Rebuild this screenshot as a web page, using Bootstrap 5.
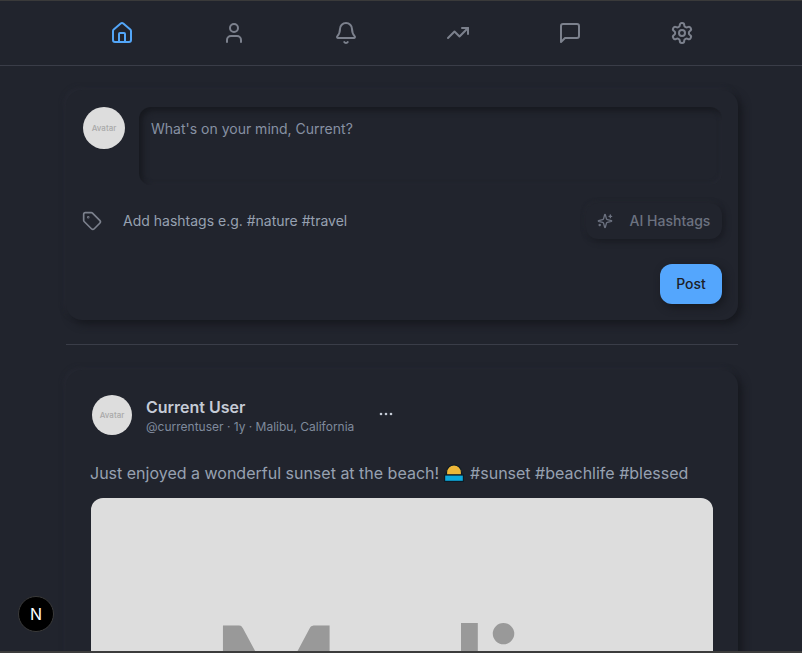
<!DOCTYPE html>
<html lang="en">
<head>
  <meta charset="UTF-8">
  <title>Feed</title>
  <link href="https://cdn.jsdelivr.net/npm/bootstrap@5.3.0/dist/css/bootstrap.min.css" rel="stylesheet">
  <style>
    html, body { height: 100%; overflow: hidden; }
    body {
      background: #21242d;
      font-family: Inter, "Liberation Sans", sans-serif;
      color: #9aa3b2;
      border-top: 1px solid #3a3a3a;
      border-bottom: 2px solid #3c3c3c;
    }
    .lc { fill: none; stroke: currentColor; stroke-width: 2; stroke-linecap: round; stroke-linejoin: round; }
    .top-nav { height: 65px; border-bottom: 1px solid #3a3d48; }
    .nav-cell { width: 112px; color: #7c818d; }
    .nav-cell.active { color: #53a6f8; }
    .page-col { width: 672px; margin-left: 66px; }
    .neo-card {
      background: #21242d;
      border-radius: 16px;
      box-shadow: 4px 4px 8px #16181e, -2px -2px 5px #272a34;
    }
    .composer { height: 230px; padding: 17px 16px 16px 17px; margin-top: 24px; }
    .composer-top { column-gap: 14px; }
    .avatar-ph {
      background: #dddddd;
      color: #a9a9a9;
      border-radius: 50%;
      font-weight: 500;
      flex-shrink: 0;
    }
    .av-42 { width: 42px; height: 42px; font-size: 8px; }
    .av-40 { width: 40px; height: 40px; font-size: 8px; margin-left: 1px; margin-right: 14px; }
    .composer-input {
      height: 78px;
      padding: 13px 12px;
      border-radius: 12px;
      font-size: 14px;
      line-height: 18px;
      color: #8791a3;
      box-shadow: inset 3px 3px 6px #16181e, inset -1px -1px 4px #282b35;
    }
    .tag-row { height: 36px; margin-top: 18px; }
    .tag-icon { width: 22px; margin-right: 19px; margin-left: -1px; color: #7c818d; }
    .tag-text { font-size: 14px; color: #97a1b1; padding-bottom: 1px; }
    .ai-btn {
      width: 136px;
      height: 36px;
      gap: 17px;
      padding: 0 1px 1px 0;
      border-radius: 12px;
      font-size: 14px;
      font-weight: 500;
      color: #6c7280;
      background: #21242d;
      box-shadow: 2px 2px 6px #181a21, -1px -1px 4px #272a33;
    }
    .post-btn {
      width: 62px;
      height: 40px;
      margin-top: 25px;
      padding-bottom: 1px;
      border-radius: 12px;
      background: #54a6fd;
      color: #1c2027;
      font-size: 14px;
      font-weight: 500;
      box-shadow: 3px 3px 8px #16181e;
    }
    .divider-line { height: 1px; background: #3a3d48; margin: 24px 0 25px; }
    .post-card { padding: 25px 25px 0 25px; height: 400px; }
    .user-name { font-size: 16px; font-weight: 600; line-height: 24px; color: #c5cbd6; }
    .user-meta { font-size: 12px; line-height: 16px; color: #7f8a9c; }
    .more-dots { width: 14px; margin-left: 25px; margin-bottom: 2px; color: #c5cbd6; }
    .post-text { font-size: 16px; line-height: 24px; color: #97a1b1; margin: 26px 0 13px -1px; }
    .emoji-pic { vertical-align: -3px; margin: 0 2px 0 0; }
    .img-ph {
      background: #dddddd;
      height: 400px;
      border-radius: 12px;
      overflow: hidden;
      color: #999999;
      font-family: Lato, sans-serif;
      font-weight: 700;
      font-size: 136px;
      line-height: 1;
      padding: 106px 0 0 121px;
    }
    .ph-a { letter-spacing: 43px; }
    .next-badge {
      position: fixed;
      left: 18px;
      bottom: 21px;
      width: 36px;
      height: 36px;
      background: #000;
      border: 1px solid #3a3a3a;
      border-radius: 50%;
      color: #fff;
      font-size: 16px;
      font-weight: 400;
    }
  </style>
</head>
<body>
  <nav class="top-nav">
    <div class="page-col d-flex h-100">
      <div class="nav-cell active d-flex align-items-center justify-content-center">
        <svg class="lc" width="24" height="24" viewBox="0 0 24 24"><path d="M15 21v-8a1 1 0 0 0-1-1h-4a1 1 0 0 0-1 1v8"/><path d="M3 10a2 2 0 0 1 .709-1.528l7-5.999a2 2 0 0 1 2.582 0l7 5.999A2 2 0 0 1 21 10v9a2 2 0 0 1-2 2H5a2 2 0 0 1-2-2z"/></svg>
      </div>
      <div class="nav-cell d-flex align-items-center justify-content-center">
        <svg class="lc" width="24" height="24" viewBox="0 0 24 24"><path d="M19 21v-2a4 4 0 0 0-4-4H9a4 4 0 0 0-4 4v2"/><circle cx="12" cy="7" r="4"/></svg>
      </div>
      <div class="nav-cell d-flex align-items-center justify-content-center">
        <svg class="lc" width="24" height="24" viewBox="0 0 24 24"><path d="M10.268 21a2 2 0 0 0 3.464 0"/><path d="M3.262 15.326A1 1 0 0 0 4 17h16a1 1 0 0 0 .74-1.673C19.41 13.956 18 12.499 18 8A6 6 0 0 0 6 8c0 4.499-1.411 5.956-2.738 7.326"/></svg>
      </div>
      <div class="nav-cell d-flex align-items-center justify-content-center">
        <svg class="lc" width="24" height="24" viewBox="0 0 24 24"><polyline points="22 7 13.5 15.5 8.5 10.5 2 17"/><polyline points="16 7 22 7 22 13"/></svg>
      </div>
      <div class="nav-cell d-flex align-items-center justify-content-center">
        <svg class="lc" width="24" height="24" viewBox="0 0 24 24"><path d="M21 15a2 2 0 0 1-2 2H7l-4 4V5a2 2 0 0 1 2-2h14a2 2 0 0 1 2 2z"/></svg>
      </div>
      <div class="nav-cell d-flex align-items-center justify-content-center">
        <svg class="lc" width="24" height="24" viewBox="0 0 24 24"><path d="M12.22 2h-.44a2 2 0 0 0-2 2v.18a2 2 0 0 1-1 1.73l-.43.25a2 2 0 0 1-2 0l-.15-.08a2 2 0 0 0-2.73.73l-.22.38a2 2 0 0 0 .73 2.73l.15.1a2 2 0 0 1 1 1.72v.51a2 2 0 0 1-1 1.74l-.15.09a2 2 0 0 0-.73 2.73l.22.38a2 2 0 0 0 2.73.73l.15-.08a2 2 0 0 1 2 0l.43.25a2 2 0 0 1 1 1.73V20a2 2 0 0 0 2 2h.44a2 2 0 0 0 2-2v-.18a2 2 0 0 1 1-1.73l.43-.25a2 2 0 0 1 2 0l.15.08a2 2 0 0 0 2.73-.73l.22-.39a2 2 0 0 0-.73-2.73l-.15-.08a2 2 0 0 1-1-1.74v-.5a2 2 0 0 1 1-1.74l.15-.09a2 2 0 0 0 .73-2.73l-.22-.38a2 2 0 0 0-2.73-.73l-.15.08a2 2 0 0 1-2 0l-.43-.25a2 2 0 0 1-1-1.73V4a2 2 0 0 0-2-2z"/><circle cx="12" cy="12" r="3"/></svg>
      </div>
    </div>
  </nav>

  <main class="page-col">
    <section class="neo-card composer">
      <div class="composer-top d-flex">
        <div class="avatar-ph av-42 d-flex align-items-center justify-content-center">Avatar</div>
        <div class="composer-input flex-grow-1">What's on your mind, Current?</div>
      </div>
      <div class="tag-row d-flex align-items-center justify-content-between">
        <div class="d-flex align-items-center">
          <div class="tag-icon d-flex">
            <svg class="lc" width="20" height="20" viewBox="0 0 24 24"><path d="M12.586 2.586A2 2 0 0 0 11.172 2H4a2 2 0 0 0-2 2v7.172a2 2 0 0 0 .586 1.414l8.704 8.704a2.426 2.426 0 0 0 3.42 0l6.58-6.58a2.426 2.426 0 0 0 0-3.42z"/><circle cx="7.5" cy="7.5" r=".5"/></svg>
          </div>
          <span class="tag-text">Add hashtags e.g. #nature #travel</span>
        </div>
        <div class="ai-btn d-flex align-items-center justify-content-center">
          <svg class="lc" width="16" height="16" viewBox="0 0 24 24"><path d="M9.937 15.5A2 2 0 0 0 8.5 14.063l-6.135-1.582a.5.5 0 0 1 0-.962L8.5 9.936A2 2 0 0 0 9.937 8.5l1.582-6.135a.5.5 0 0 1 .963 0L14.063 8.5A2 2 0 0 0 15.5 9.937l6.135 1.581a.5.5 0 0 1 0 .964L15.5 14.063a2 2 0 0 0-1.437 1.437l-1.582 6.135a.5.5 0 0 1-.963 0z"/><path d="M20 3v4"/><path d="M22 5h-4"/><path d="M4 17v2"/><path d="M5 18H3"/></svg>
          <span>AI Hashtags</span>
        </div>
      </div>
      <div class="d-flex justify-content-end">
        <div class="post-btn d-flex align-items-center justify-content-center">Post</div>
      </div>
    </section>

    <div class="divider-line"></div>

    <article class="neo-card post-card">
      <div class="d-flex align-items-center">
        <div class="avatar-ph av-40 d-flex align-items-center justify-content-center">Avatar</div>
        <div>
          <div class="user-name">Current User</div>
          <div class="user-meta">@currentuser · 1y · Malibu, California</div>
        </div>
        <div class="more-dots d-flex">
          <svg width="14" height="4" viewBox="0 0 14 4"><circle cx="2" cy="2" r="1.3" fill="currentColor"/><circle cx="7" cy="2" r="1.3" fill="currentColor"/><circle cx="12" cy="2" r="1.3" fill="currentColor"/></svg>
        </div>
      </div>
      <p class="post-text">Just enjoyed a wonderful sunset at the beach!
        <svg class="emoji-pic" width="20" height="18" viewBox="0 0 20 18"><path d="M2.5 11V8.5a7.5 7.5 0 0 1 15 0V11z" fill="#eeb739" stroke="#0d1c26" stroke-width="1.2"/><rect x=".6" y="11" width="18.8" height="6.4" fill="#0ea9dc" stroke="#0d1c26" stroke-width="1.2"/></svg>
        #sunset #beachlife #blessed</p>
      <div class="img-ph">M<span class="ph-a">a</span>li</div>
    </article>
  </main>

  <div class="next-badge d-flex align-items-center justify-content-center">N</div>
  <script src="https://cdn.jsdelivr.net/npm/bootstrap@5.3.0/dist/js/bootstrap.bundle.min.js"></script>
</body>
</html>
